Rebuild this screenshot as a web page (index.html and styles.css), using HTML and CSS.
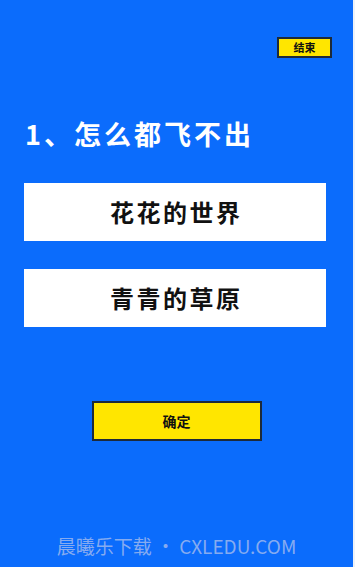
FILE: index.html
```html
<!DOCTYPE html>
<html lang="zh">
<head>
<meta charset="utf-8">
<link rel="stylesheet" href="styles.css">
</head>
<body>
<div class="screen">
  <div class="topbar">
    <div class="end-btn">结束</div>
  </div>
  <div class="question">1、怎么都飞不出</div>
  <div class="options">
    <div class="option">花花的世界</div>
    <div class="option">青青的草原</div>
  </div>
  <div class="confirm-wrap">
    <div class="confirm-btn">确定</div>
  </div>
  <div class="footer">晨曦乐下载 • CXLEDU.COM</div>
</div>
</body>
</html>
```
FILE: styles.css
```css
html, body {
  margin: 0;
  padding: 0;
  background: #eef2f8;
}
body {
  width: 355px;
  height: 567px;
  overflow: hidden;
  font-family: "Noto Sans CJK SC", "Noto Sans", sans-serif;
}
.screen {
  width: 353px;
  height: 567px;
  background: #0b6cfc;
  display: flex;
  flex-direction: column;
}
.topbar {
  display: flex;
  justify-content: flex-end;
  padding: 37px 21px 0 0;
}
.end-btn {
  width: 51px;
  height: 17px;
  border: 2px solid #1d2a3a;
  background: #ffe600;
  color: #111;
  font-size: 11px;
  font-weight: 700;
  line-height: 17px;
  text-align: center;
}
.question {
  margin: 56px 0 0 25px;
  color: #fff;
  font-size: 27px;
  letter-spacing: 3px;
  font-weight: 700;
  line-height: 40px;
  height: 40px;
}
.options {
  margin: 29px 0 0 24px;
  display: flex;
  flex-direction: column;
  gap: 28px;
}
.option {
  width: 302px;
  height: 58px;
  background: #fff;
  color: #111;
  font-size: 24px;
  letter-spacing: 2.5px;
  text-indent: 2.5px;
  font-weight: 700;
  line-height: 58px;
  text-align: center;
}
.confirm-wrap {
  display: flex;
  justify-content: center;
  margin-top: 74px;
}
.confirm-btn {
  width: 166px;
  height: 36px;
  border: 2px solid #1d2a3a;
  background: #ffe600;
  color: #111;
  font-size: 14px;
  font-weight: 700;
  line-height: 36px;
  text-align: center;
}
.footer {
  margin-top: 92px;
  text-align: center;
  color: #86abf0;
  font-size: 19px;
  line-height: 26px;
  font-family: "Noto Sans CJK SC", "Open Sans", sans-serif;
}
```
